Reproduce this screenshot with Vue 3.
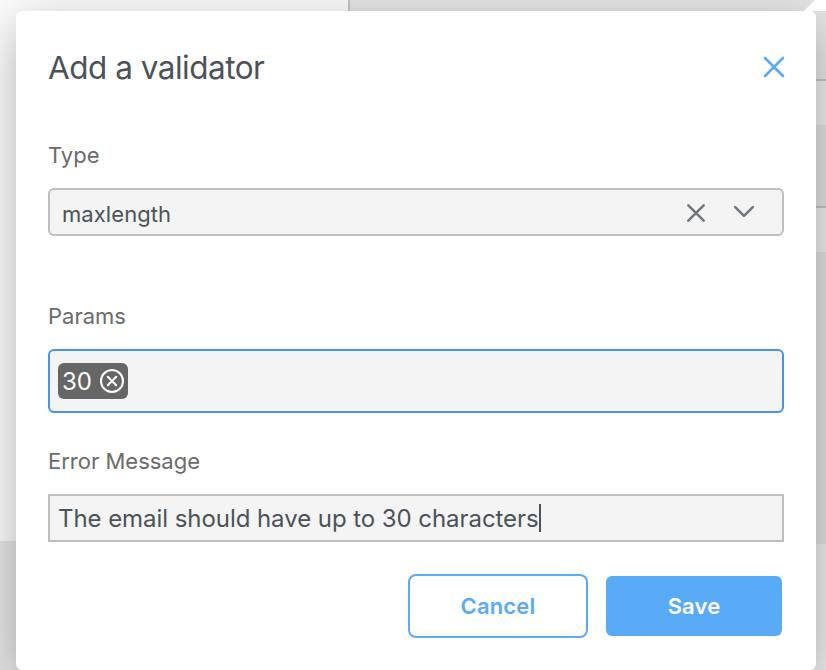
<script setup>
import { ref } from 'vue'

const type = ref('maxlength')
const params = ref(['30'])
const message = ref('The email should have up to 30 characters')
</script>

<template>
  <div class="screen">
    <div class="page">
      <div class="page-left">
        <div class="left-main"></div>
        <div class="left-footer"></div>
      </div>
      <div class="page-right">
        <div class="row head"></div>
        <div class="row item"></div>
        <div class="row gap"></div>
        <div class="row item"></div>
        <div class="row body"></div>
        <div class="row foot"></div>
      </div>
    </div>
    <svg class="pointer" width="22" height="11" viewBox="0 0 22 11"><path d="M0 11L11 0H22V11Z" fill="#fff" /></svg>

    <section class="dialog">
      <header class="header">
        <h1 class="title">Add a validator</h1>
        <svg class="close" width="22" height="22" viewBox="0 0 22 22"><path d="M2 2L20 20M20 2L2 20" /></svg>
      </header>

      <label class="label">Type</label>
      <div class="select">
        <span class="value">{{ type }}</span>
        <svg class="clear" width="20" height="20" viewBox="0 0 20 20"><path d="M2.3 2.3L17.7 17.7M17.7 2.3L2.3 17.7" /></svg>
        <svg class="chevron" width="22" height="14" viewBox="0 0 22 14"><path d="M2.2 2.2L11 10.8L19.8 2.2" /></svg>
      </div>

      <label class="label params-label">Params</label>
      <div class="tags">
        <span v-for="p in params" :key="p" class="tag">
          <span class="tag-text">{{ p }}</span>
          <svg width="26" height="26" viewBox="0 0 26 26"><circle cx="13" cy="13" r="11" /><path d="M8.8 8.8L17.2 17.2M17.2 8.8L8.8 17.2" /></svg>
        </span>
      </div>

      <label class="label error-label">Error Message</label>
      <div class="input"><span class="message">{{ message }}</span><i class="caret"></i></div>

      <footer class="actions">
        <button class="btn cancel">Cancel</button>
        <button class="btn save">Save</button>
      </footer>
    </section>
  </div>
</template>

<style>
body { overflow: hidden; }
</style>

<style scoped>
* { box-sizing: border-box; }
.screen {
  position: relative;
  width: 826px;
  height: 670px;
  overflow: hidden;
  font-family: Inter, "Liberation Sans", sans-serif;
}
.page { display: flex; height: 100%; }
.page-left { width: 348px; display: flex; flex-direction: column; }
.left-main { height: 541px; background: #fcfcfc; }
.left-footer { flex: 1; background: #e6e6e6; }
.page-right { flex: 1; border-left: 2px solid #c6c6c6; display: flex; flex-direction: column; }
.head { height: 79px; background: #e6e6e6; }
.item { height: 46px; border-top: 2px solid #c4c4c4; background: #ededed; }
.gap { height: 81px; background: #e0e0e0; }
.body { height: 292px; background: #e0e0e0; }
.foot { flex: 1; background: #ededed; }
.pointer { position: absolute; left: 804px; top: 0; z-index: 3; }
.dialog {
  position: absolute;
  left: 16px;
  top: 11px;
  z-index: 2;
  width: 800px;
  height: 659px;
  padding: 0 32px;
  display: flex;
  flex-direction: column;
  background: #fff;
  border-radius: 6px;
  box-shadow: 0 14px 50px rgba(0, 0, 0, 0.3);
}
.header { height: 112px; display: flex; justify-content: space-between; align-items: center; }
.title { margin: 0; padding-top: 2px; font-size: 31.5px; font-weight: 400; line-height: 40px; color: #4b525a; letter-spacing: -0.5px; }
svg { flex: none; fill: none; stroke-linecap: round; stroke-linejoin: round; }
.close { stroke: #5aabf7; stroke-width: 2.6; margin-right: -1px; }
.label { margin-top: 16px; height: 32px; line-height: 32px; font-size: 22px; color: #6b6b6b; letter-spacing: 0; }
.select {
  margin-top: 17px;
  height: 48px;
  display: flex;
  align-items: center;
  padding: 0 27px 0 12px;
  background: #f4f4f4;
  border: 2px solid #bfbfbf;
  border-radius: 6px;
}
.value { flex: 1; padding-top: 4px; line-height: 28px; font-size: 22px; color: #4b525a; letter-spacing: 0.08px; }
.clear, .chevron { stroke: #6e767e; stroke-width: 2.5; }
.clear { margin: 2px 27px 0 0; }
.params-label { margin-top: 64px; }
.tags {
  margin-top: 17px;
  height: 64px;
  display: flex;
  align-items: center;
  padding: 0 8px;
  background: #f4f4f4;
  border: 2px solid #4794eb;
  border-radius: 6px;
}
.tag { width: 70px; height: 36px; padding: 0 3px 0 4px; display: flex; align-items: center; justify-content: space-between; border-radius: 6px; background: #666; color: #fff; }
.tag-text { padding-top: 2px; font-size: 24px; line-height: 34px; }
.tag svg { stroke: #fff; stroke-width: 2; }
.error-label { margin-top: 32px; }
.input {
  margin-top: 17px;
  height: 48px;
  display: flex;
  align-items: center;
  padding: 0 8px;
  background: #f4f4f4;
  border: 2px solid #bfbfbf;
}
.message { font-size: 24px; color: #4b525a; white-space: nowrap; letter-spacing: -0.06px; }
.caret { width: 2px; height: 28px; background: #4b525a; }
.actions { margin-top: 32px; padding-right: 2px; display: flex; justify-content: flex-end; align-items: center; gap: 18px; }
.btn { padding: 0; font: 600 22px/28px Inter, "Liberation Sans", sans-serif; letter-spacing: 0.15px; }
.cancel { width: 180px; height: 64px; color: #5aabf7; background: #fff; border: 2px solid #5aabf7; border-radius: 8px; }
.save { width: 176px; height: 60px; color: #fff; background: #5aabf7; border: 0; border-radius: 6px; }
</style>
